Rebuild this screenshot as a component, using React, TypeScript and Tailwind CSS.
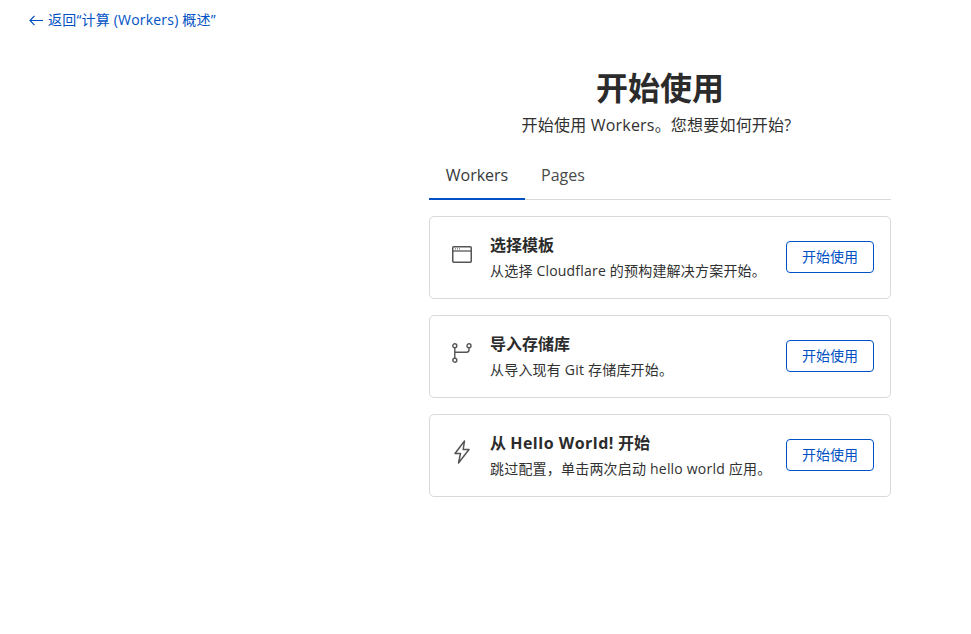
import React from 'react';

const font = "font-['Open_Sans','Noto_Sans_CJK_SC',sans-serif]";

const BackArrow = () => (
  <svg width="14" height="11" viewBox="0 0 14 11" fill="none" stroke="#0051c3" strokeWidth="1.2">
    <path d="M5.5 0.8 1 5.5l4.5 4.7M1 5.5h13" />
  </svg>
);

const WindowIcon = () => (
  <svg width="20" height="17" viewBox="0 0 20 17" fill="none" stroke="#555555">
    <rect x="0.75" y="0.75" width="18.5" height="15.5" rx="1" strokeWidth="1.5" />
    <line x1="1" y1="5" x2="19" y2="5" strokeWidth="1.3" />
    <path d="M3 2.9h1M5 2.9h1M7 2.9h1" strokeWidth="1" />
  </svg>
);

const BranchIcon = () => (
  <svg width="20" height="20" viewBox="0 0 20 20" fill="none" stroke="#555555" strokeWidth="1.4">
    <circle cx="2.8" cy="2.8" r="2" />
    <circle cx="2.8" cy="17.2" r="2" />
    <circle cx="17" cy="2.8" r="2" />
    <path d="M2.8 4.8v10.4" />
    <path d="M17 4.8v2a2.5 2.5 0 0 1-2.5 2.5H2.8" />
  </svg>
);

const BoltIcon = () => (
  <svg width="16" height="24" viewBox="0 0 16 24" fill="none" stroke="#555555" strokeWidth="1.5" strokeLinejoin="round">
    <path d="M10.5 1 1 13.5h5.5L4.5 23 15 9.5H9.2Z" />
  </svg>
);

const options = [
  { id: 'template', title: '选择模板', desc: '从选择 Cloudflare 的预构建解决方案开始。', icon: <WindowIcon /> },
  { id: 'git', title: '导入存储库', desc: '从导入现有 Git 存储库开始。', icon: <BranchIcon /> },
  {
    id: 'hello',
    title: (
      <>
        从 <span className="tracking-[0.5px]">Hello World!</span> 开始
      </>
    ),
    desc: '跳过配置，单击两次启动 hello world 应用。',
    icon: <BoltIcon />,
  },
];

const App: React.FC = () => {
  return (
    <div className={`${font} min-h-[634px] bg-white text-[#313131]`}>
      {/* Back link */}
      <a className="flex items-center gap-[5px] pl-[29px] pt-[10px] h-[20px] box-content text-[14px] leading-[20px] text-[#0051c3] tracking-[0.2px]">
        <BackArrow />
        <span>返回“计算 (Workers) 概述”</span>
      </a>

      <div className="ml-[429px] w-[462px] pt-[34px]">
        {/* Heading */}
        <h1 className="text-center text-[32px] leading-[48px] font-bold text-[#2b2b2b]">开始使用</h1>
        <p className="text-center text-[16px] leading-[24px] mt-[1px] pr-[7px] tracking-[0.2px]">
          开始使用 Workers。您想要如何开始?
        </p>

        {/* Tabs */}
        <div className="flex mt-[18px] border-b border-[#d9d9d9] h-[45px]">
          <button className="w-[96px] h-[45px] pb-[4px] border-b-2 border-[#0051c3] text-[16px] text-[#36393a]">Workers</button>
          <button className="w-[76px] h-[45px] pb-[6px] text-[16px] text-[#4a4a4a]">Pages</button>
        </div>

        {/* Options */}
        <div className="flex flex-col gap-4 mt-4">
          {options.map((item) => (
            <div
              key={item.id}
              className="flex items-center h-[83px] border border-[#d9d9d9] rounded-[5px] pl-[21px] pr-4"
            >
              <div className="w-[39px] mb-[7px]">
                <div className="w-[21px] flex justify-center">{item.icon}</div>
              </div>
              <div className="flex-1 mb-[2px]">
                <div className="text-[16px] leading-[24px] font-bold text-[#2b2b2b]">{item.title}</div>
                <div className="text-[14px] leading-[20px] mt-[4px] tracking-[0.2px]">{item.desc}</div>
              </div>
              <button className="w-[88px] h-[32px] mb-[2px] border border-[#0051c3] rounded-[4px] text-[14px] text-[#0051c3]">
                开始使用
              </button>
            </div>
          ))}
        </div>
      </div>
    </div>
  );
};

export default App;
